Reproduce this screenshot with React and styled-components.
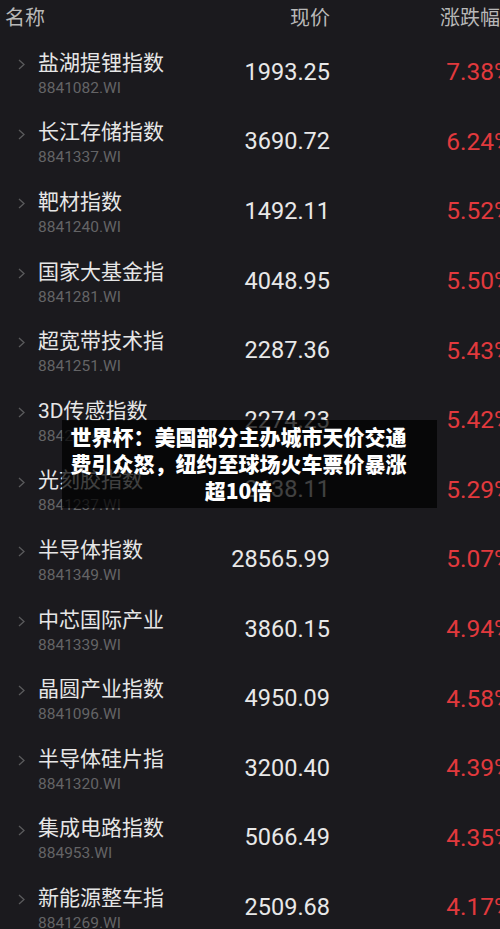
import React from 'react';
import styled, { createGlobalStyle } from 'styled-components';

const GlobalStyle = createGlobalStyle`
  html, body {
    margin: 0;
    padding: 0;
    background: #1b1a1e;
    overflow: hidden;
  }
  body {
    font-family: Roboto, "Noto Sans CJK SC", sans-serif;
  }
`;

const Screen = styled.div`
  position: relative;
  width: 520px;
  height: 929px;
  background: #1b1a1e;
  overflow: hidden;
`;

const Header = styled.div`
  display: grid;
  grid-template-columns: 200px 130px 190px;
  height: 37px;
  align-items: center;
  color: #b8b8b8;
  font-size: 20px;
  font-family: "Noto Sans CJK SC", sans-serif;
`;

const HeadCell = styled.div`
  text-align: ${(p) => p.$align || 'left'};
  padding-left: ${(p) => p.$pad || 0}px;
  line-height: 24px;
  margin-top: -3px;
  white-space: nowrap;
`;

const Row = styled.div`
  display: grid;
  grid-template-columns: 38px 162px 130px 182px;
  height: 69.6px;
  align-items: center;
`;

const Chevron = styled.svg`
  align-self: start;
  margin: 22px 0 0 18px;
  width: 7px;
  height: 11px;
`;

const NameBlock = styled.div`
  display: flex;
  flex-direction: column;
  margin-top: 4px;
`;

const Name = styled.div`
  color: #e6e6e6;
  font-size: 21px;
  line-height: 26px;
  font-family: Roboto, "Noto Sans CJK SC", sans-serif;
  white-space: nowrap;
`;

const Code = styled.div`
  color: #646466;
  font-size: 15.5px;
  line-height: 20px;
  margin-top: 2px;
  white-space: nowrap;
`;

const Price = styled.div`
  color: #e8e8e8;
  font-size: 23.5px;
  text-align: right;
  white-space: nowrap;
`;

const Change = styled.div`
  color: #e2393d;
  font-size: 24.5px;
  text-align: right;
  white-space: nowrap;
`;

const Caption = styled.div`
  position: absolute;
  left: 62px;
  top: 420px;
  width: 375px;
  box-sizing: border-box;
  padding: 3px 30px 4px 8px;
  background: rgba(0, 0, 0, 0.72);
  color: #ffffff;
  font-family: "Noto Sans CJK SC", sans-serif;
  font-weight: 900;
  font-size: 21px;
  line-height: 27px;
  text-align: center;
`;

const rows = [
  ['盐湖提锂指数', '8841082.WI', '1993.25', '7.38'],
  ['长江存储指数', '8841337.WI', '3690.72', '6.24'],
  ['靶材指数', '8841240.WI', '1492.11', '5.52'],
  ['国家大基金指', '8841281.WI', '4048.95', '5.50'],
  ['超宽带技术指', '8841251.WI', '2287.36', '5.43'],
  ['3D传感指数', '8842004.WI', '2274.23', '5.42'],
  ['光刻胶指数', '8841237.WI', '2438.11', '5.29'],
  ['半导体指数', '8841349.WI', '28565.99', '5.07'],
  ['中芯国际产业', '8841339.WI', '3860.15', '4.94'],
  ['晶圆产业指数', '8841096.WI', '4950.09', '4.58'],
  ['半导体硅片指', '8841320.WI', '3200.40', '4.39'],
  ['集成电路指数', '884953.WI', '5066.49', '4.35'],
  ['新能源整车指', '8841269.WI', '2509.68', '4.17'],
];

const App = () => {
  return (
    <Screen>
      <GlobalStyle />
      <Header>
        <HeadCell $pad={5}>名称</HeadCell>
        <HeadCell $align="right">现价</HeadCell>
        <HeadCell $pad={110}>涨跌幅</HeadCell>
      </Header>
      {rows.map(([name, code, price, pct]) => (
        <Row key={code}>
          <Chevron viewBox="0 0 7 11">
            <polyline points="1,1 6,5.5 1,10" fill="none" stroke="#5a5a5c" strokeWidth="1.3" />
          </Chevron>
          <NameBlock>
            <Name>{name}</Name>
            <Code>{code}</Code>
          </NameBlock>
          <Price>{price}</Price>
          <Change>{pct}%</Change>
        </Row>
      ))}
      <Caption>世界杯：美国部分主办城市天价交通费引众怒，纽约至球场火车票价暴涨超10倍</Caption>
    </Screen>
  );
};

export default App;
